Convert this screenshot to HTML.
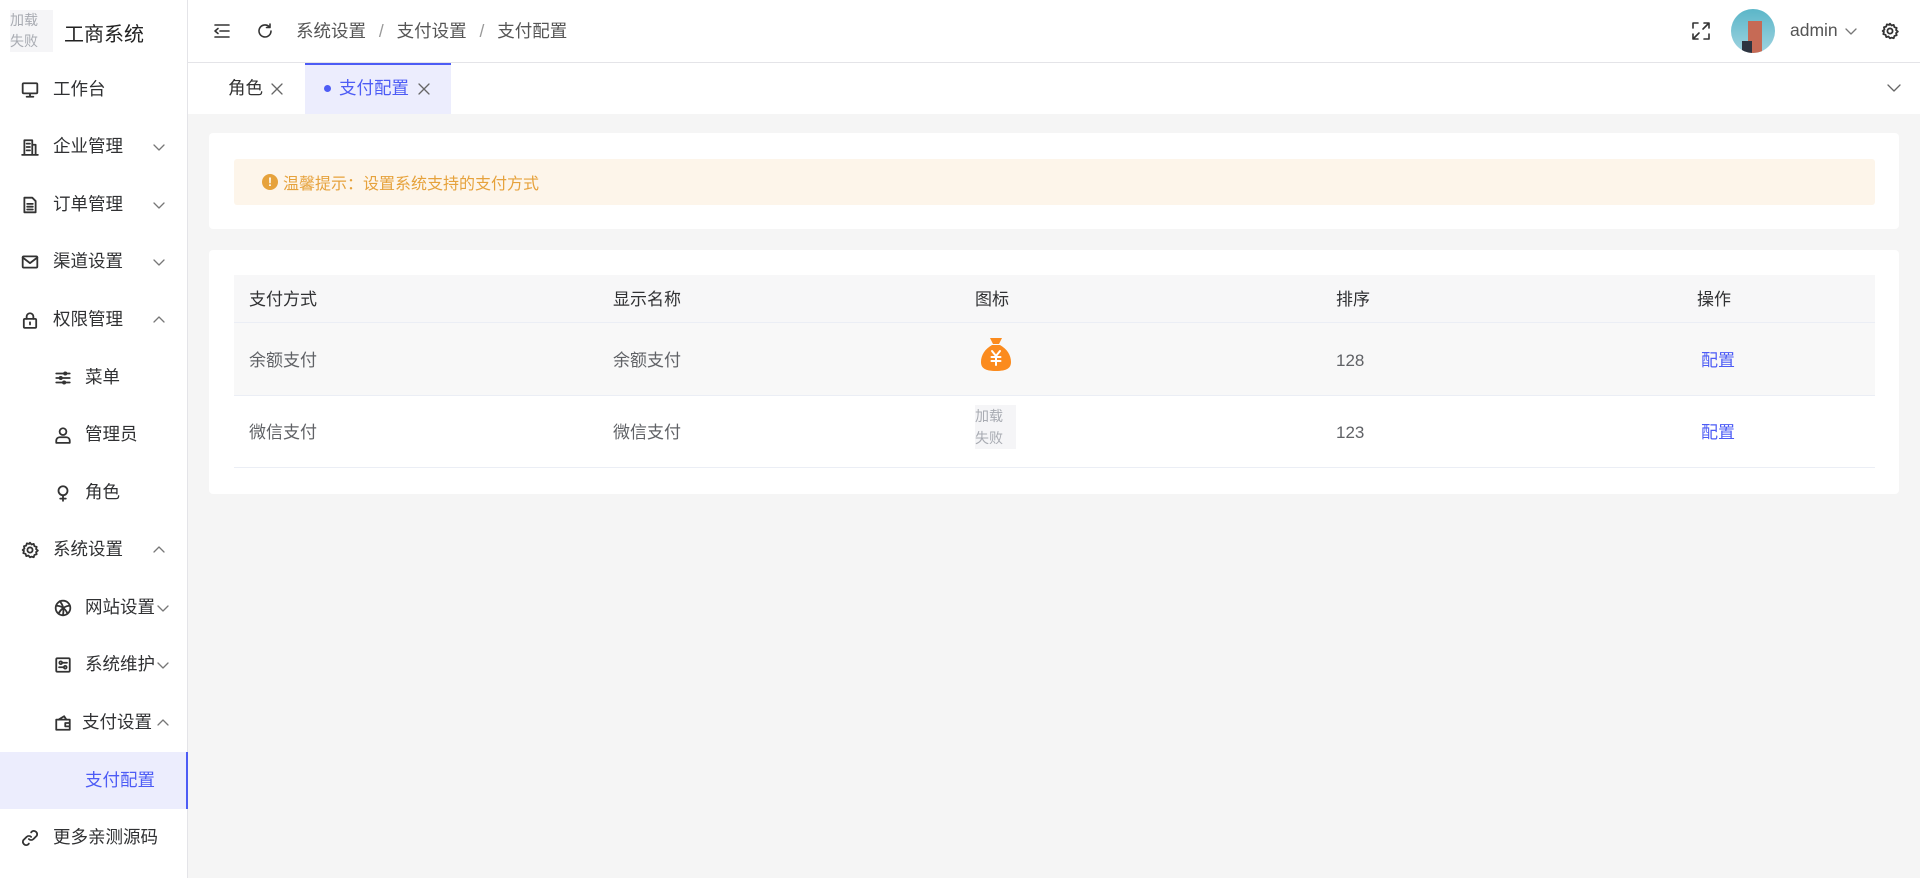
<!DOCTYPE html>
<html><head><meta charset="utf-8"><style>
*{margin:0;padding:0;box-sizing:border-box}
body{width:1920px;height:878px;overflow:hidden;background:#f5f5f5;font-family:"Liberation Sans","Noto Sans CJK SC",sans-serif;color:#303133;position:relative;font-size:17px}
.a{position:absolute}
svg{position:absolute;fill:none;stroke:#333;stroke-width:1.6;stroke-linecap:round;stroke-linejoin:round}
#side{left:0;top:0;width:188px;height:878px;background:#fff;border-right:1px solid #e4e4e8}
.mi{position:absolute;left:0;width:187px;height:57px;line-height:57px;font-size:17.5px;color:#303133}
.mi .t{position:absolute;left:53px}
.mi.s .t{left:85px}
.mi svg{top:20px;left:21px;width:18px;height:18px}
.mi.s svg{left:54px}
.chev{top:24px!important;left:152px!important;width:14px!important;height:10px!important;stroke:#777!important;stroke-width:1.3!important}
#top{left:188px;top:0;right:0;height:63px;background:#fff;border-bottom:1px solid #e4e4e8}
#tabs{left:188px;top:63px;right:0;height:51px;background:#fff}
.card{background:#fff;border-radius:4px}
.cell{position:absolute;font-size:17px;color:#606266}
.num{position:absolute;font-size:17px;color:#606266}
</style></head><body>
<div id="side" class="a">
  <div class="a" style="left:10px;top:10px;width:43px;height:42px;background:#f5f5f7;color:#a8abb2;font-size:14px;line-height:21px;">加载<br>失败</div>
  <div class="a" style="left:64px;top:18px;font-size:20px;color:#222">工商系统</div>

  <div class="mi" style="top:61px"><svg viewBox="0 0 16 16"><rect x="1.5" y="2" width="13" height="9" rx="1"/><path d="M8 11v3M5 14h6"/></svg><span class="t">工作台</span></div>
  <div class="mi" style="top:118px"><svg viewBox="0 0 16 16"><path d="M1 15h14M3 15V2h7v13M10 6h3v9M5 5h3M5 8h3M5 11h3"/></svg><span class="t">企业管理</span><svg class="chev" viewBox="0 0 14 10"><path d="M2 3l5 5 5-5"/></svg></div>
  <div class="mi" style="top:176px"><svg viewBox="0 0 16 16"><path d="M3 1.5h7l3 3v10H3z M5.5 7h5M5.5 9.5h5M5.5 12h5"/></svg><span class="t">订单管理</span><svg class="chev" viewBox="0 0 14 10"><path d="M2 3l5 5 5-5"/></svg></div>
  <div class="mi" style="top:233px"><svg viewBox="0 0 16 16"><rect x="1.5" y="3" width="13" height="10" rx="1"/><path d="M1.5 4l6.5 5 6.5-5"/></svg><span class="t">渠道设置</span><svg class="chev" viewBox="0 0 14 10"><path d="M2 3l5 5 5-5"/></svg></div>
  <div class="mi" style="top:291px"><svg viewBox="0 0 16 16"><rect x="2.5" y="7" width="11" height="8" rx="1"/><path d="M5 7V5a3 3 0 016 0v2M8 10v2"/></svg><span class="t">权限管理</span><svg class="chev" viewBox="0 0 14 10"><path d="M2 7l5-5 5 5"/></svg></div>
  <div class="mi s" style="top:349px"><svg viewBox="0 0 16 16"><path d="M2 4h12M2 8h12M2 12h12"/><circle cx="10" cy="4" r="1" fill="#333"/><circle cx="6" cy="8" r="1" fill="#333"/><circle cx="9" cy="12" r="1" fill="#333"/></svg><span class="t">菜单</span></div>
  <div class="mi s" style="top:406px"><svg viewBox="0 0 16 16"><circle cx="8" cy="5" r="3"/><path d="M2 15v-2a3 3 0 013-3h6a3 3 0 013 3v2z"/></svg><span class="t">管理员</span></div>
  <div class="mi s" style="top:464px"><svg viewBox="0 0 16 16"><circle cx="8" cy="6" r="4"/><path d="M8 10v5M5.5 13h5"/></svg><span class="t">角色</span></div>
  <div class="mi" style="top:521px"><svg viewBox="0 0 16 16"><circle cx="8" cy="8" r="2.3"/><path d="M8 1.5l1.3 1.6 2-.5.6 2 2 .6-.5 2 1.6 1.3-1.6 1.3.5 2-2 .6-.6 2-2-.5L8 14.5l-1.3-1.6-2 .5-.6-2-2-.6.5-2L1.5 8l1.6-1.3-.5-2 2-.6.6-2 2 .5z"/></svg><span class="t">系统设置</span><svg class="chev" viewBox="0 0 14 10"><path d="M2 7l5-5 5 5"/></svg></div>
  <div class="mi s" style="top:579px"><svg viewBox="0 0 16 16"><circle cx="8" cy="8" r="6.5"/><path d="M2 6c4 0 8 2 10 7M5 2c3 3 4 7 3 12M14 6c-4 0-8 3-10 7"/></svg><span class="t">网站设置</span><svg class="chev" viewBox="0 0 14 10" style="left:156px!important"><path d="M2 3l5 5 5-5"/></svg></div>
  <div class="mi s" style="top:636px"><svg viewBox="0 0 16 16"><rect x="2" y="2" width="12" height="12" rx="1"/><circle cx="6" cy="6" r="1.2"/><circle cx="10" cy="10" r="1.2"/><path d="M7.5 6h4M4.5 10h4"/></svg><span class="t">系统维护</span><svg class="chev" viewBox="0 0 14 10" style="left:156px!important"><path d="M2 3l5 5 5-5"/></svg></div>
  <div class="mi s" style="top:694px"><svg viewBox="0 0 16 16"><path d="M2 5h12v9H2zM4 5l5-3 2 3M10 8h4v3h-4z"/></svg><span class="t" style="left:82px">支付设置</span><svg class="chev" viewBox="0 0 14 10" style="left:156px!important"><path d="M2 7l5-5 5 5"/></svg></div>
  <div class="mi" style="top:752px;background:#ecedfd;border-right:2px solid #4d5cf5;width:188px"><span class="t" style="left:85px;color:#4d5cf5">支付配置</span></div>
  <div class="mi" style="top:809px"><svg viewBox="0 0 16 16"><path d="M7 9a3 3 0 004 0l3-3a3 3 0 00-4-4l-1 1M9 7a3 3 0 00-4 0l-3 3a3 3 0 004 4l1-1"/></svg><span class="t">更多亲测源码</span></div>
</div>

<div id="top" class="a">
  <svg style="left:25px;top:23px;width:18px;height:16px" viewBox="0 0 18 16"><path d="M2 2h14M7 8h9M2 14h14M5 5.5L2 8l3 2.5"/></svg>
  <svg style="left:68px;top:22px;width:18px;height:18px" viewBox="0 0 18 18"><path d="M15 9a6 6 0 11-2-4.5M14 2v3.5h-3.5"/></svg>
  <div class="a" style="left:108px;top:18px;font-size:17.5px;color:#555">系统设置 <span style="color:#999;margin:0 8px">/</span> 支付设置 <span style="color:#999;margin:0 8px">/</span> 支付配置</div>
  <svg style="left:1504px;top:22px;width:18px;height:18px" viewBox="0 0 18 18"><path d="M1 6V1h5M12 1h5v5M17 12v5h-5M6 17H1v-5M11 7l5-5M7 11l-5 5"/></svg>
  <div class="a" style="left:1543px;top:9px;width:44px;height:44px;border-radius:50%;background:linear-gradient(#5bb6c8,#9fd3e0);overflow:hidden">
    <div class="a" style="left:17px;top:12px;width:14px;height:32px;background:#c66a55"></div>
    <div class="a" style="left:11px;top:32px;width:10px;height:12px;background:#2d3440"></div>
  </div>
  <div class="a" style="left:1602px;top:20px;font-size:17.5px;color:#555">admin</div>
  <svg style="left:1656px;top:26px;width:14px;height:10px;stroke:#777;stroke-width:1.3" viewBox="0 0 14 10"><path d="M2 3l5 5 5-5"/></svg>
  <svg style="left:1693px;top:22px;width:18px;height:18px" viewBox="0 0 16 16"><circle cx="8" cy="8" r="2.3"/><path d="M8 1.5l1.3 1.6 2-.5.6 2 2 .6-.5 2 1.6 1.3-1.6 1.3.5 2-2 .6-.6 2-2-.5L8 14.5l-1.3-1.6-2 .5-.6-2-2-.6.5-2L1.5 8l1.6-1.3-.5-2 2-.6.6-2 2 .5z"/></svg>
</div>

<div id="tabs" class="a">
  <div class="a" style="left:40px;top:12px;font-size:17.5px;color:#333">角色</div>
  <svg style="left:83px;top:20px;width:12px;height:12px;stroke:#666;stroke-width:1.3" viewBox="0 0 12 12"><path d="M1 1l10 10M11 1L1 11"/></svg>
  <div class="a" style="left:117px;top:0;width:146px;height:51px;background:#ecedfd;border-top:2px solid #4d5cf5"></div>
  <div class="a" style="left:136px;top:22px;width:7px;height:7px;border-radius:50%;background:#4d5cf5"></div>
  <div class="a" style="left:151px;top:12px;font-size:17.5px;color:#4d5cf5">支付配置</div>
  <svg style="left:230px;top:20px;width:12px;height:12px;stroke:#666;stroke-width:1.3" viewBox="0 0 12 12"><path d="M1 1l10 10M11 1L1 11"/></svg>
  <svg style="left:1698px;top:20px;width:16px;height:10px;stroke:#666;stroke-width:1.3" viewBox="0 0 16 10"><path d="M2 2l6 6 6-6"/></svg>
</div>

<div class="a card" style="left:209px;top:133px;width:1690px;height:96px">
  <div class="a" style="left:25px;top:26px;width:1641px;height:46px;background:#fdf5ea;border-radius:3px">
    <div class="a" style="left:28px;top:15px;width:16px;height:16px;border-radius:50%;background:#e6a23c;color:#fff;font-size:12px;font-weight:bold;text-align:center;line-height:16px">!</div>
    <div class="a" style="left:49px;top:11px;font-size:16px;color:#e6a23c">温馨提示：设置系统支持的支付方式</div>
  </div>
</div>

<div class="a card" style="left:209px;top:250px;width:1690px;height:244px">
  <div class="a" style="left:25px;top:25px;width:1641px;height:48px;background:#f7f7f8;border-bottom:1px solid #ebeef5"></div>
  <div class="a" style="left:25px;top:73px;width:1641px;height:73px;background:#f8f8f8;border-bottom:1px solid #ebeef5"></div>
  <div class="a" style="left:25px;top:146px;width:1641px;height:72px;border-bottom:1px solid #ebeef5"></div>
  <div class="cell" style="left:40px;top:35px;color:#303133">支付方式</div>
  <div class="cell" style="left:404px;top:35px;color:#303133">显示名称</div>
  <div class="cell" style="left:766px;top:35px;color:#303133">图标</div>
  <div class="cell" style="left:1127px;top:35px;color:#303133">排序</div>
  <div class="cell" style="left:1488px;top:35px;color:#303133">操作</div>
  <div class="cell" style="left:40px;top:96px">余额支付</div>
  <div class="cell" style="left:404px;top:96px">余额支付</div>
  <svg style="left:770px;top:86px;width:34px;height:36px;stroke:none" viewBox="0 0 34 36"><path fill="#fb8b1e" d="M11 2h12l-3 6h-6z M13 9h8c7 4 11 10 11 17 0 6-4 9-15 9S2 32 2 26c0-7 4-13 11-17z"/><path d="M13 15l4 5 4-5M17 20v9M12.5 21h9M12.5 25h9" stroke="#fff" stroke-width="2" fill="none"/></svg>
  <div class="num" style="left:1127px;top:101px">128</div>
  <div class="cell" style="left:1492px;top:96px;color:#4d5cf5">配置</div>
  <div class="cell" style="left:40px;top:168px">微信支付</div>
  <div class="cell" style="left:404px;top:168px">微信支付</div>
  <div class="a" style="left:766px;top:155px;width:41px;height:44px;background:#f5f5f7;color:#a8abb2;font-size:14px;line-height:22px">加载<br>失败</div>
  <div class="num" style="left:1127px;top:173px">123</div>
  <div class="cell" style="left:1492px;top:168px;color:#4d5cf5">配置</div>
</div>
</body></html>
